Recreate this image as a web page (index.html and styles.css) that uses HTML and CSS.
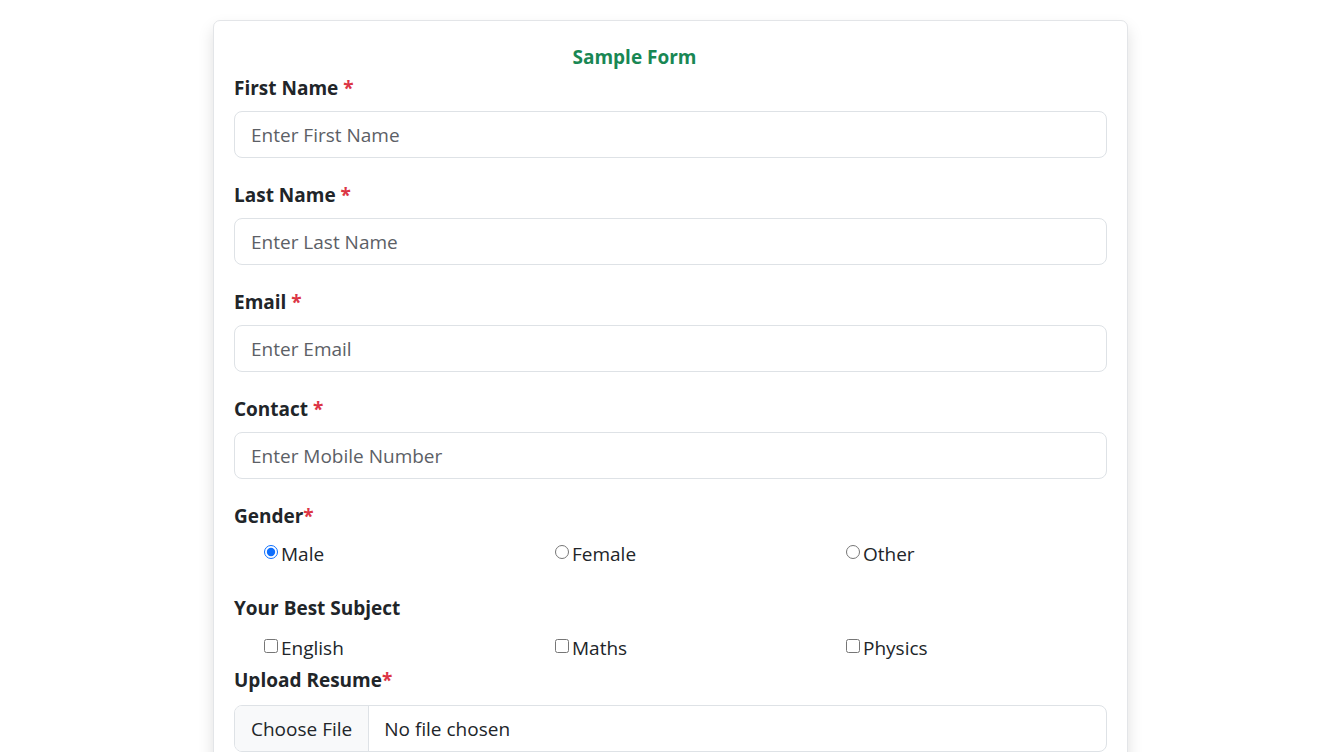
FILE: index.html
```html
<!DOCTYPE html>
<html lang="en">
<head>
<meta charset="utf-8">
<title>Sample Form</title>
<link rel="stylesheet" href="styles.css">
</head>
<body>
<form class="card">
  <h5 class="title">Sample Form</h5>

  <div class="group">
    <label class="label" for="fn">First Name <span class="req">*</span></label>
    <input class="control" id="fn" type="text" placeholder="Enter First Name">
  </div>

  <div class="group">
    <label class="label" for="ln">Last Name <span class="req">*</span></label>
    <input class="control" id="ln" type="text" placeholder="Enter Last Name">
  </div>

  <div class="group">
    <label class="label" for="em">Email <span class="req">*</span></label>
    <input class="control" id="em" type="email" placeholder="Enter Email">
  </div>

  <div class="group">
    <label class="label" for="ct">Contact <span class="req">*</span></label>
    <input class="control" id="ct" type="text" placeholder="Enter Mobile Number">
  </div>

  <div class="group gender">
    <div class="label">Gender<span class="req">*</span></div>
    <div class="choices">
      <label class="choice"><input type="radio" name="g" checked>Male</label>
      <label class="choice"><input type="radio" name="g">Female</label>
      <label class="choice"><input type="radio" name="g">Other</label>
    </div>
  </div>

  <div class="group subj">
    <div class="label">Your Best Subject</div>
    <div class="choices">
      <label class="choice"><input type="checkbox">English</label>
      <label class="choice"><input type="checkbox">Maths</label>
      <label class="choice"><input type="checkbox">Physics</label>
    </div>
  </div>

  <div class="group last">
    <div class="label upload">Upload Resume<span class="req">*</span></div>
    <div class="file">
      <span class="file-btn">Choose File</span>
      <span class="file-name">No file chosen</span>
    </div>
  </div>
</form>
</body>
</html>
```

FILE: styles.css
```css
html {
  scrollbar-width: none;
}
html::-webkit-scrollbar {
  display: none;
}
body {
  margin: 0;
  background: #fff;
  font-family: "Open Sans", "Noto Sans", Arial, sans-serif;
  color: #212529;
}
.card {
  box-sizing: border-box;
  width: 915px;
  margin: 20px 0 40px 213px;
  padding: 21px 20px 20px;
  border: 1px solid #e3e5e8;
  border-radius: 7px;
  background: #fff;
  box-shadow: 0 8px 16px rgba(0, 0, 0, 0.13);
}
.title {
  margin: 0;
  padding-right: 72px;
  text-align: center;
  font-size: 19px;
  line-height: 31px;
  font-weight: 700;
  color: #198754;
}
.group {
  margin-bottom: 22px;
}
.group.last {
  margin-bottom: 0;
}
.label {
  display: block;
  font-size: 19px;
  line-height: 30px;
  font-weight: 700;
  margin-bottom: 8px;
  color: #212529;
}
.req {
  color: #dc3545;
}
.control {
  display: block;
  box-sizing: border-box;
  width: 100%;
  height: 47px;
  padding: 0 16px;
  border: 1px solid #dee2e6;
  border-radius: 8px;
  font-family: inherit;
  font-size: 19px;
  color: #212529;
  background: #fff;
  outline: none;
}
.control::placeholder {
  color: #5c6066;
  opacity: 1;
}
.choices {
  display: grid;
  grid-template-columns: repeat(3, 1fr);
}
.gender {
  margin-bottom: 24px;
}
.subj {
  margin-bottom: 2px;
}
.subj .choices {
  padding-top: 2px;
}
.choice {
  display: flex;
  align-items: center;
  padding-left: 25px;
  font-size: 19px;
  line-height: 30px;
  color: #212529;
}
.choice input {
  flex: none;
  width: 14px;
  height: 14px;
  margin: 0 3px 4px 5px;
}
input[type="radio"] {
  accent-color: #0d6efd;
}
.upload {
  margin-bottom: 10px;
}
.file {
  display: flex;
  box-sizing: border-box;
  height: 47px;
  border: 1px solid #dee2e6;
  border-radius: 8px;
  overflow: hidden;
  font-size: 19px;
  align-items: stretch;
}
.file-btn {
  display: flex;
  align-items: center;
  padding: 0 16px;
  background: #f8f9fa;
  border-right: 1px solid #dee2e6;
  color: #212529;
}
.file-name {
  display: flex;
  align-items: center;
  padding-left: 15px;
  color: #212529;
}
```
